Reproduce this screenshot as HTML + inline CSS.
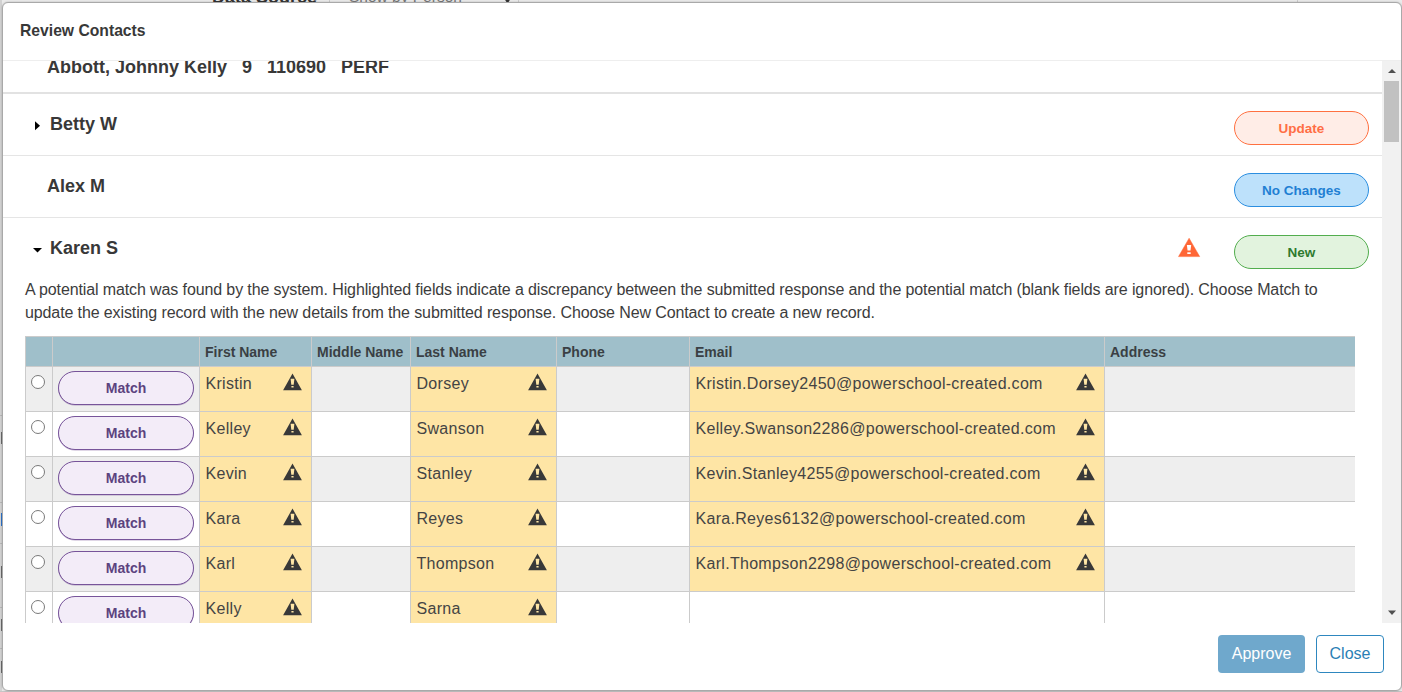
<!DOCTYPE html>
<html><head><meta charset="utf-8">
<style>
*{box-sizing:border-box;margin:0;padding:0}
html,body{width:1402px;height:692px;overflow:hidden}
body{position:relative;background:#eaeaea;font-family:"Liberation Sans",sans-serif;color:#333}
.a{position:absolute;white-space:nowrap}
.bgtxt{font-size:18px;line-height:18px}
#modal{position:absolute;left:2px;top:2px;width:1400px;height:689px;border:1px solid #a9a9a9;border-radius:6px;background:#fff;box-shadow:0 0 2px rgba(0,0,0,.25);overflow:hidden}
#title{font-weight:bold;font-size:15.7px;line-height:16px;color:#383838}
#scroll{position:absolute;left:3px;top:61px;width:1379px;height:562px;overflow:hidden}
#inner{position:absolute;left:-3px;top:-61px;width:1402px;height:700px}
.name{font-weight:bold;font-size:18px;line-height:18px;color:#383838}
.hl{position:absolute;height:1px;background:#e5e5e5}
.badge{position:absolute;width:135px;height:34px;border-radius:17px;border:1px solid;font-weight:bold;font-size:13.5px;line-height:33.5px;text-align:center}
.para{font-size:16px;line-height:23px;letter-spacing:-0.115px;color:#3c3c3c}
table{position:absolute;left:25px;top:336px;border-collapse:collapse;table-layout:fixed}
td,th{border:1px solid #cbcbcb;padding:0;vertical-align:top;position:relative}
th{background:#9fbfca;height:30px;font-weight:bold;font-size:14px;text-align:left;padding-left:5px;padding-top:2px;line-height:27px;color:#3a3f44}
td{height:45px;font-size:16px}
tr.g td{background:#eeeeee}
td:last-child,th:last-child{border-right:0}
tr td.y{background:#fee5a5}
.radio{position:absolute;left:5px;top:8px;width:14px;height:14px;border:1px solid #7a7a7a;border-radius:50%;background:#fff}
.match{position:absolute;left:5px;top:4px;width:136px;height:34px;border:1px solid #77549a;border-radius:17px;background:#f3ecf8;box-shadow:0 0.6px 0 rgba(111,74,142,.45);color:#5c437f;font-weight:bold;font-size:14px;line-height:33px;text-align:center}
.val{position:absolute;left:5.5px;top:9px;line-height:16px;letter-spacing:0.3px;color:#444}
.warn{position:absolute;top:6px;width:19px;height:18px}
</style></head><body>
<svg width="0" height="0" style="position:absolute"><defs><g id="wi"><path fill-rule="evenodd" d="M9.5 0.5 L18.9 17.2 L0.1 17.2 Z M7.6 5.8 L11.4 5.8 L10.7 11.7 L8.3 11.7 Z M8.4 13 L10.6 13 L10.6 14.6 L8.4 14.6 Z" fill="#383838"/></g></defs></svg>
<!-- background page -->
<div class="a bgtxt" style="left:212px;top:-12px;font-weight:bold">Data Source</div>
<div class="a" style="left:329px;top:0;width:1px;height:3px;background:#ccc"></div>
<div class="a bgtxt" style="left:349px;top:-12px;color:#777;font-size:15.5px">Show by Person</div>
<svg class="a" style="left:500px;top:-5px" width="16" height="10"><path d="M3.5 0 L7.5 6.5 L11.5 0" stroke="#333" stroke-width="2.4" fill="none"/></svg>
<div class="a" style="left:518px;top:0;width:1px;height:3px;background:#ccc"></div>
<div class="a" style="left:1297px;top:0;width:1px;height:3px;background:#ccc"></div>
<div class="a" style="left:0;top:0;width:2px;height:692px;background:#d2d2d2"></div>
<div class="a" style="left:0;top:691px;width:1402px;height:1px;background:#c6c6c6"></div>
<div class="a" style="left:1px;top:432px;width:1px;height:12px;background:#6a6a6a"></div>
<div class="a" style="left:1px;top:513px;width:1px;height:13px;background:#2a72cc"></div>
<div class="a" style="left:1px;top:566px;width:1px;height:12px;background:#6a6a6a"></div>
<div class="a" style="left:1px;top:619px;width:1px;height:12px;background:#6a6a6a"></div>
<div class="a" style="left:1px;top:661px;width:1px;height:12px;background:#6a6a6a"></div>
<div class="a" style="left:0;top:415px;width:2px;height:1px;background:#b8b8b8"></div>
<div class="a" style="left:0;top:502px;width:2px;height:1px;background:#b8b8b8"></div>
<div class="a" style="left:0;top:543px;width:2px;height:1px;background:#b8b8b8"></div>
<div class="a" style="left:0;top:607px;width:2px;height:1px;background:#b8b8b8"></div>
<div class="a" style="left:0;top:648px;width:2px;height:1px;background:#b8b8b8"></div>

<div id="modal"></div>
<div class="a" id="title" style="left:20px;top:23px">Review Contacts</div>
<div class="hl" style="left:3px;top:60px;width:1398px;background:#eee"></div>

<div id="scroll"><div id="inner">
  <div class="a name" style="left:47px;top:58px">Abbott, Johnny Kelly</div>
  <div class="a name" style="left:242px;top:58px">9</div>
  <div class="a name" style="left:267px;top:58px">110690</div>
  <div class="a name" style="left:341px;top:58px">PERF</div>
  <div class="hl" style="left:3px;top:92px;width:1380px;height:2px;background:#e2e2e2"></div>

  <svg class="a" style="left:34px;top:121px" width="7" height="10"><polygon points="1,0.3 6,4.8 1,9.3" fill="#000"/></svg>
  <div class="a name" style="left:50px;top:115px">Betty W</div>
  <div class="badge" style="left:1234px;top:111px;border-color:#ff7040;background:#ffede7;color:#ff6e45">Update</div>
  <div class="hl" style="left:3px;top:155px;width:1380px"></div>

  <div class="a name" style="left:47px;top:177px">Alex M</div>
  <div class="badge" style="left:1234px;top:173px;border-color:#2b8ee0;background:#bde1fb;color:#1f7fd3">No Changes</div>
  <div class="hl" style="left:3px;top:217px;width:1380px"></div>

  <svg class="a" style="left:32px;top:247px" width="11" height="7"><polygon points="1,1 10,1 5.5,5.5" fill="#000"/></svg>
  <div class="a name" style="left:50px;top:239px">Karen S</div>
  <svg class="a" style="left:1178px;top:238px" width="23" height="20" viewBox="0 0 23 20"><path d="M11.1 0.2 L21.7 18.6 L0.5 18.6 Z" fill="#ff6636" stroke="#ff6636" stroke-linejoin="round" stroke-width="0.5"/><path d="M8.9 7.1 L13.2 7.1 L12.5 12.5 L9.6 12.5 Z" fill="#fff"/><rect x="9.3" y="14.3" width="3.4" height="1.7" fill="#fff"/></svg>
  <div class="badge" style="left:1234px;top:235px;border-color:#52ad4e;background:#e2f3de;color:#2e7a2e">New</div>

  <div class="a para" style="left:25px;top:278px">A potential match was found by the system. Highlighted fields indicate a discrepancy between the submitted response and the potential match (blank fields are ignored). Choose Match to<br>update the existing record with the new details from the submitted response. Choose New Contact to create a new record.</div>

  <table id="tbl">
    <colgroup><col style="width:27px"><col style="width:147px"><col style="width:112px"><col style="width:99px"><col style="width:146px"><col style="width:133px"><col style="width:415px"><col style="width:250px"></colgroup>
    <tr><th></th><th></th><th>First Name</th><th>Middle Name</th><th>Last Name</th><th>Phone</th><th>Email</th><th>Address</th></tr>
<tr class="g"><td><div class="radio"></div></td><td><div class="match">Match</div></td><td class="y"><span class="val">Kristin</span><svg class="warn" style="right:9px" viewBox="0 0 19 18" width="19" height="18"><use href="#wi"/></svg></td><td></td><td class="y"><span class="val">Dorsey</span><svg class="warn" style="right:9px" viewBox="0 0 19 18" width="19" height="18"><use href="#wi"/></svg></td><td></td><td class="y"><span class="val">Kristin.Dorsey2450@powerschool-created.com</span><svg class="warn" style="right:9px" viewBox="0 0 19 18" width="19" height="18"><use href="#wi"/></svg></td><td></td></tr>
<tr><td><div class="radio"></div></td><td><div class="match">Match</div></td><td class="y"><span class="val">Kelley</span><svg class="warn" style="right:9px" viewBox="0 0 19 18" width="19" height="18"><use href="#wi"/></svg></td><td></td><td class="y"><span class="val">Swanson</span><svg class="warn" style="right:9px" viewBox="0 0 19 18" width="19" height="18"><use href="#wi"/></svg></td><td></td><td class="y"><span class="val">Kelley.Swanson2286@powerschool-created.com</span><svg class="warn" style="right:9px" viewBox="0 0 19 18" width="19" height="18"><use href="#wi"/></svg></td><td></td></tr>
<tr class="g"><td><div class="radio"></div></td><td><div class="match">Match</div></td><td class="y"><span class="val">Kevin</span><svg class="warn" style="right:9px" viewBox="0 0 19 18" width="19" height="18"><use href="#wi"/></svg></td><td></td><td class="y"><span class="val">Stanley</span><svg class="warn" style="right:9px" viewBox="0 0 19 18" width="19" height="18"><use href="#wi"/></svg></td><td></td><td class="y"><span class="val">Kevin.Stanley4255@powerschool-created.com</span><svg class="warn" style="right:9px" viewBox="0 0 19 18" width="19" height="18"><use href="#wi"/></svg></td><td></td></tr>
<tr><td><div class="radio"></div></td><td><div class="match">Match</div></td><td class="y"><span class="val">Kara</span><svg class="warn" style="right:9px" viewBox="0 0 19 18" width="19" height="18"><use href="#wi"/></svg></td><td></td><td class="y"><span class="val">Reyes</span><svg class="warn" style="right:9px" viewBox="0 0 19 18" width="19" height="18"><use href="#wi"/></svg></td><td></td><td class="y"><span class="val">Kara.Reyes6132@powerschool-created.com</span><svg class="warn" style="right:9px" viewBox="0 0 19 18" width="19" height="18"><use href="#wi"/></svg></td><td></td></tr>
<tr class="g"><td><div class="radio"></div></td><td><div class="match">Match</div></td><td class="y"><span class="val">Karl</span><svg class="warn" style="right:9px" viewBox="0 0 19 18" width="19" height="18"><use href="#wi"/></svg></td><td></td><td class="y"><span class="val">Thompson</span><svg class="warn" style="right:9px" viewBox="0 0 19 18" width="19" height="18"><use href="#wi"/></svg></td><td></td><td class="y"><span class="val">Karl.Thompson2298@powerschool-created.com</span><svg class="warn" style="right:9px" viewBox="0 0 19 18" width="19" height="18"><use href="#wi"/></svg></td><td></td></tr>
<tr><td><div class="radio"></div></td><td><div class="match">Match</div></td><td class="y"><span class="val">Kelly</span><svg class="warn" style="right:9px" viewBox="0 0 19 18" width="19" height="18"><use href="#wi"/></svg></td><td></td><td class="y"><span class="val">Sarna</span><svg class="warn" style="right:9px" viewBox="0 0 19 18" width="19" height="18"><use href="#wi"/></svg></td><td></td><td></td><td></td></tr>
  </table>

</div></div>
<div class="a" style="left:1382px;top:61px;width:19px;height:562px;background:#f1f1f1"></div>
<div class="a" style="left:1384px;top:81px;width:15px;height:61px;background:#c1c1c1"></div>
<svg class="a" style="left:1387px;top:68px" width="10" height="6"><polygon points="1,5 9,5 5,1" fill="#505050"/></svg>
<svg class="a" style="left:1387px;top:609px" width="10" height="7"><polygon points="1,1.5 9,1.5 5,6" fill="#505050"/></svg>

<div class="a" style="left:1218px;top:635px;width:87px;height:38px;border-radius:4px;background:#6fa8cc;color:#fff;font-size:16px;line-height:37px;text-align:center">Approve</div>
<div class="a" style="left:1316px;top:635px;width:68px;height:38px;border-radius:4px;border:1px solid #2e87bf;background:#fff;color:#2b7fb5;font-size:16px;line-height:35px;text-align:center">Close</div>

<script>
</script>
</body></html>
